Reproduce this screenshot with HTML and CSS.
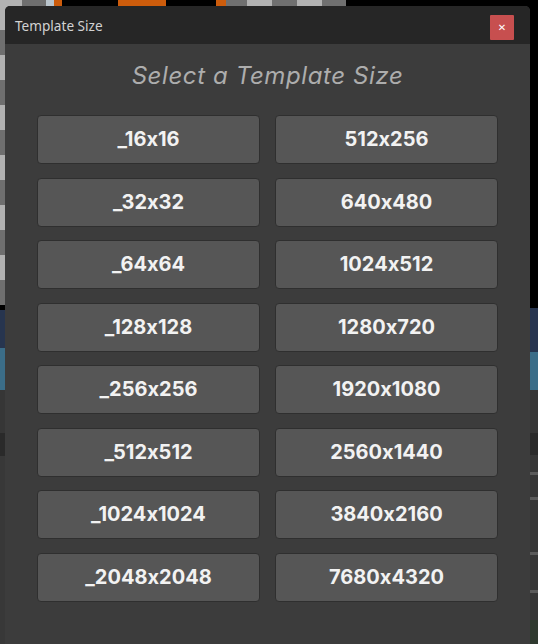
FILE: index.html
```html
<!DOCTYPE html>
<html lang="en">
<head>
<meta charset="utf-8">
<title>Template Size</title>
<link rel="stylesheet" href="styles.css">
</head>
<body>
<div class="backdrop">
  <div class="strip-top"></div>
  <div class="strip-left"></div>
  <div class="strip-right"></div>
</div>
<div class="dialog">
  <div class="titlebar">
    <span class="title">Template Size</span>
    <button class="close" aria-label="Close">&#x2715;</button>
  </div>
  <div class="body">
    <h1 class="heading">Select a Template Size</h1>
    <div class="grid">
      <button class="opt">_16x16</button>
      <button class="opt">512x256</button>
      <button class="opt">_32x32</button>
      <button class="opt">640x480</button>
      <button class="opt">_64x64</button>
      <button class="opt">1024x512</button>
      <button class="opt">_128x128</button>
      <button class="opt">1280x720</button>
      <button class="opt">_256x256</button>
      <button class="opt">1920x1080</button>
      <button class="opt">_512x512</button>
      <button class="opt">2560x1440</button>
      <button class="opt">_1024x1024</button>
      <button class="opt">3840x2160</button>
      <button class="opt">_2048x2048</button>
      <button class="opt">7680x4320</button>
    </div>
  </div>
</div>
</body>
</html>
```

FILE: styles.css
```css
html, body {
  margin: 0;
  padding: 0;
  width: 538px;
  height: 644px;
  overflow: hidden;
  background: #000;
  font-family: Inter, "Noto Sans", sans-serif;
}

.backdrop {
  position: absolute;
  inset: 0;
}

.strip-top {
  position: absolute;
  left: 0;
  top: 0;
  width: 538px;
  height: 8px;
  background:
    linear-gradient(to right,
      #b2b2b2 0 22px, #6f6f6f 22px 46px, #b9c4cc 46px 54px, #cc5c0c 54px 62px,
      #000 62px 118px, #cc5c0c 118px 166px, #000 166px 216px, #cc5c0c 216px 226px,
      #707070 226px 247px, #b2b2b2 247px 272px, #707070 272px 297px,
      #b2b2b2 297px 322px, #707070 322px 346px, #000 346px 538px);
}

.strip-left {
  position: absolute;
  left: 0;
  top: 8px;
  width: 6px;
  height: 636px;
  background:
    linear-gradient(to bottom,
      #b2b2b2 0 22px, #6f6f6f 22px 47px, #b2b2b2 47px 72px, #6f6f6f 72px 97px,
      #b2b2b2 97px 122px, #6f6f6f 122px 147px, #b2b2b2 147px 172px, #6f6f6f 172px 197px,
      #b2b2b2 197px 222px, #6f6f6f 222px 247px, #b2b2b2 247px 272px, #6f6f6f 272px 297px,
      #000 297px 302px, #27354f 302px 340px, #3b6d88 340px 382px, #363636 382px 425px,
      #2a2a2a 425px 448px, #383838 448px 636px);
}

.strip-right {
  position: absolute;
  right: 0;
  top: 0;
  width: 8px;
  height: 644px;
  background:
    linear-gradient(to bottom,
      #000 0 308px, #27354f 308px 352px, #3b6d88 352px 390px, #363636 390px 433px,
      #2a2a2a 433px 455px, #363636 455px 472px, #5a5a5a 472px 475px, #363636 475px 497px,
      #5a5a5a 497px 500px, #363636 500px 552px, #5a5a5a 552px 555px, #363636 555px 590px,
      #5a5a5a 590px 593px, #363636 593px 620px, #2f3a2f 620px 644px);
}

.dialog {
  position: absolute;
  left: 5px;
  top: 6px;
  width: 525px;
  height: 638px;
  display: flex;
  flex-direction: column;
  background: #3c3c3c;
  border-radius: 5px 5px 0 0;
  overflow: hidden;
}

.titlebar {
  height: 38px;
  flex: none;
  box-sizing: border-box;
  display: flex;
  align-items: center;
  justify-content: space-between;
  padding: 0 16px 0 10px;
  background: #262626;
}

.title {
  font-family: "Noto Sans", "Open Sans", sans-serif;
  font-size: 13.6px;
  color: #d2d2d2;
  margin-top: 1px;
}

.close {
  width: 24px;
  height: 25px;
  margin-top: 5px;
  padding: 0;
  border: none;
  border-radius: 1px;
  background: #c74f4f;
  color: #fff;
  font-family: "DejaVu Sans", sans-serif;
  font-size: 10px;
  font-weight: bold;
  line-height: 25px;
  text-align: center;
}

.body {
  flex: 1;
  display: flex;
  flex-direction: column;
  padding: 0 32px;
}

.heading {
  margin: 13px 0 0;
  height: 38px;
  line-height: 38px;
  text-align: center;
  font-family: Inter, sans-serif;
  font-style: italic;
  font-weight: 400;
  font-size: 24px;
  color: #adadad;
  letter-spacing: 0.6px;
  font-feature-settings: "calt" 0;
}

.grid {
  margin-top: 20px;
  display: grid;
  grid-template-columns: 223px 223px;
  grid-auto-rows: 49px;
  column-gap: 15px;
  row-gap: 13.57px;
}

.opt {
  box-sizing: border-box;
  margin: 0;
  padding: 0 0 1px;
  background: #565656;
  border: 1px solid #2f2f2f;
  border-radius: 4px;
  color: #f2f2f2;
  font-family: Inter, sans-serif;
  font-weight: 700;
  font-size: 20px;
  text-align: center;
  font-feature-settings: "calt" 0;
}
```
